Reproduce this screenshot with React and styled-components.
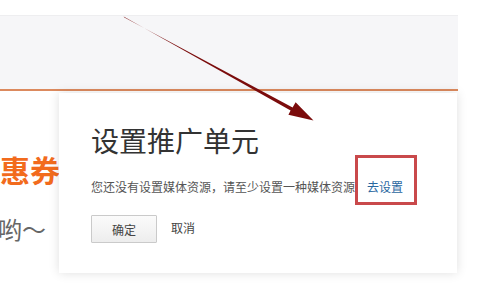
import React from 'react';
import styled, { createGlobalStyle } from 'styled-components';

const GlobalStyle = createGlobalStyle`
  html, body {
    margin: 0;
    padding: 0;
    background: #ffffff;
  }
  body {
    font-family: "Noto Sans CJK SC", "Noto Sans", sans-serif;
  }
`;

const Page = styled.div`
  position: relative;
  width: 492px;
  height: 284px;
  overflow: hidden;
  background: #ffffff;
`;

const TopGap = styled.div`
  height: 15px;
`;

const Header = styled.div`
  width: 458px;
  height: 73px;
  background: #f6f6f8;
  border-top: 1px solid #eeeef0;
  border-bottom: 2px solid #dc8a5e;
  box-sizing: content-box;
`;

const Content = styled.div`
  position: relative;
  height: 193px;
`;

const Backdrop = styled.div`
  display: flex;
  flex-direction: column;
  padding-top: 60px;
  gap: 28px;
`;

const BackdropLine = styled.div`
  font-size: ${p => p.size}px;
  line-height: 1.2;
  font-weight: ${p => (p.bold ? 700 : 400)};
  color: ${p => p.color};
  margin-left: ${p => p.shift || 0}px;
  white-space: nowrap;
`;

const Dialog = styled.div`
  position: absolute;
  left: 59px;
  top: 2px;
  width: 398px;
  box-sizing: border-box;
  padding: 31px 32px 30px 32px;
  background: #ffffff;
  box-shadow: 0 0 10px rgba(0, 0, 0, 0.13);
  display: flex;
  flex-direction: column;
`;

const Title = styled.h2`
  margin: 0;
  font-size: 28px;
  line-height: 33px;
  font-weight: 400;
  color: #333333;
`;

const Message = styled.p`
  margin: 21px 0 0 0;
  font-size: 12px;
  line-height: 18px;
  color: #555555;
  display: flex;
  gap: 12px;
  white-space: nowrap;
`;

const SetupLink = styled.a`
  position: relative;
  color: #2a679f;
  text-decoration: none;

  &::after {
    content: '';
    position: absolute;
    left: -12px;
    right: -14px;
    top: -23px;
    bottom: -9px;
    border: 3px solid #c9494b;
  }
`;

const Actions = styled.div`
  display: flex;
  align-items: center;
  gap: 14px;
  margin-top: 19px;
`;

const Button = styled.button`
  width: 66px;
  height: 28px;
  padding: 0;
  font-family: inherit;
  font-size: 12px;
  color: #444444;
  border: 1px solid #cacaca;
  border-radius: 1px;
  background: linear-gradient(#fbfbfb, #ededed);
`;

const TextButton = styled.span`
  font-size: 12px;
  line-height: 18px;
  color: #444444;
  margin-top: -2px;
`;

const ArrowLayer = styled.svg`
  position: absolute;
  left: 0;
  top: 0;
  pointer-events: none;
`;

export default function App() {
  return (
    <Page>
      <GlobalStyle />
      <TopGap />
      <Header />
      <Content>
        <Backdrop>
          <BackdropLine size={30} bold color="#f26b1d">惠券</BackdropLine>
          <BackdropLine size={24} color="#666666" shift={-2}>哟～</BackdropLine>
        </Backdrop>
        <Dialog>
          <Title>设置推广单元</Title>
          <Message>
            <span>您还没有设置媒体资源，请至少设置一种媒体资源</span>
            <SetupLink href="#">去设置</SetupLink>
          </Message>
          <Actions>
            <Button>确定</Button>
            <TextButton>取消</TextButton>
          </Actions>
        </Dialog>
      </Content>
      <ArrowLayer width="492" height="284" viewBox="0 0 492 284">
        <polygon
          points="123.6,16.6 124.4,17.4 292.6,107.4 295.6,102.2 313.5,120.5 288.4,114.8 290.6,110.6"
          fill="#7b0c0c"
        />
      </ArrowLayer>
    </Page>
  );
}
